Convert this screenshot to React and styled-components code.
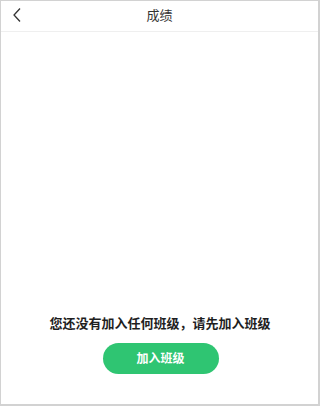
import React from "react";
import styled, { createGlobalStyle } from "styled-components";

const GlobalStyle = createGlobalStyle`
  html, body {
    margin: 0;
    padding: 0;
    background: #fff;
  }
  * {
    box-sizing: border-box;
  }
`;

const Frame = styled.div`
  width: 320px;
  height: 406px;
  display: flex;
  flex-direction: column;
  background: #fff;
  border: 1px solid #d2d2d2;
  border-right-width: 2px;
  border-bottom-width: 2px;
  font-family: "Noto Sans CJK SC", "Liberation Sans", sans-serif;
`;

const Header = styled.div`
  height: 31px;
  flex-shrink: 0;
  display: flex;
  align-items: center;
  justify-content: center;
  position: relative;
  border-bottom: 1px solid #efefef;
`;

const BackButton = styled.button`
  position: absolute;
  left: 6px;
  top: 4px;
  width: 20px;
  height: 20px;
  padding: 0;
  border: none;
  background: transparent;
  display: flex;
  align-items: center;
  justify-content: center;
`;

const Title = styled.div`
  font-size: 13px;
  color: #333;
  line-height: 1;
  margin-top: -4px;
`;

const Body = styled.div`
  flex: 1;
  display: flex;
  flex-direction: column;
  align-items: center;
  padding-top: 282px;
`;

const Message = styled.div`
  font-size: 13px;
  font-weight: 700;
  color: #1e1e1e;
  line-height: 18px;
  margin-left: 1px;
`;

const JoinButton = styled.button`
  margin-top: 11px;
  width: 116px;
  height: 31px;
  border: none;
  border-radius: 16px;
  background: #2fc572;
  color: #fff;
  font-family: inherit;
  font-size: 12px;
  font-weight: 700;
  display: flex;
  align-items: center;
  justify-content: center;
  padding: 0 0 2px;
  margin-left: 2px;
`;

const App = () => {
  return (
    <>
      <GlobalStyle />
      <Frame>
        <Header>
          <BackButton>
            <svg width="10" height="16" viewBox="0 0 10 16">
              <path d="M8 1.5 L2 8 L8 14.5" fill="none" stroke="#333" strokeWidth="1.3" />
            </svg>
          </BackButton>
          <Title>成绩</Title>
        </Header>
        <Body>
          <Message>您还没有加入任何班级，请先加入班级</Message>
          <JoinButton>加入班级</JoinButton>
        </Body>
      </Frame>
    </>
  );
};

export default App;
